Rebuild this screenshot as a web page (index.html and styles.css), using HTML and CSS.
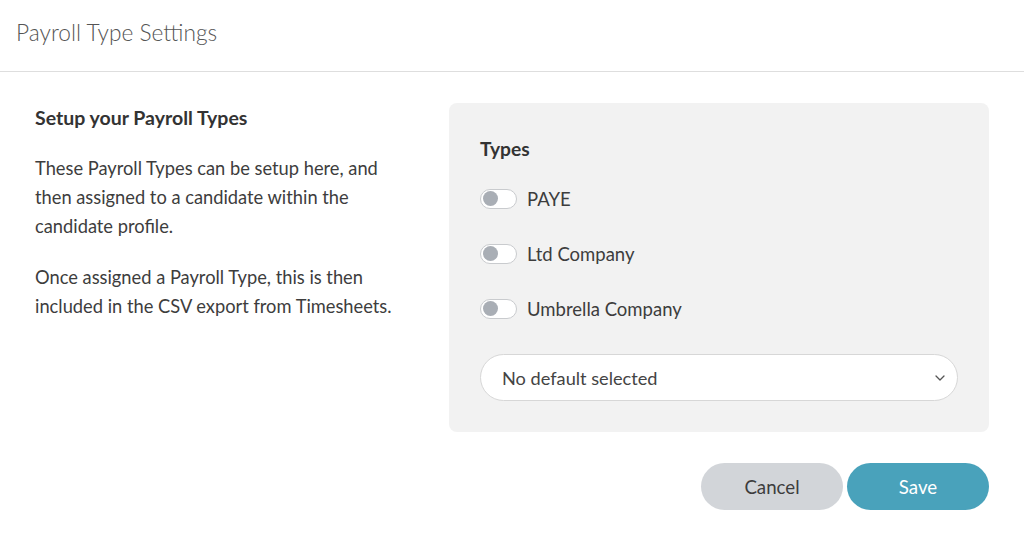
FILE: index.html
```html
<!DOCTYPE html>
<html lang="en">
<head>
<meta charset="utf-8">
<title>Payroll Type Settings</title>
<link rel="stylesheet" href="styles.css">
</head>
<body>
<header class="page-header">
  <h1 class="page-title">Payroll Type Settings</h1>
</header>
<main class="content">
  <section class="intro">
    <h2 class="intro-title">Setup your Payroll Types</h2>
    <p class="intro-text">These Payroll Types can be setup here, and then assigned to a candidate within the candidate profile.</p>
    <p class="intro-text">Once assigned a Payroll Type, this is then included in the CSV export from Timesheets.</p>
  </section>
  <section class="settings">
    <div class="panel">
      <h3 class="panel-title">Types</h3>
      <label class="type-row"><span class="toggle"><span class="knob"></span></span><span class="type-label">PAYE</span></label>
      <label class="type-row"><span class="toggle"><span class="knob"></span></span><span class="type-label">Ltd Company</span></label>
      <label class="type-row"><span class="toggle"><span class="knob"></span></span><span class="type-label">Umbrella Company</span></label>
      <div class="select">
        <span class="select-text">No default selected</span>
        <svg class="chevron" width="10" height="6" viewBox="0 0 10 6"><path d="M1 1l4 4 4-4" fill="none" stroke="#555" stroke-width="1.3" stroke-linecap="round" stroke-linejoin="round"/></svg>
      </div>
    </div>
    <div class="actions">
      <button class="btn btn-cancel">Cancel</button>
      <button class="btn btn-save">Save</button>
    </div>
  </section>
</main>
</body>
</html>
```

FILE: styles.css
```css
* { box-sizing: border-box; }
body {
  margin: 0;
  background: #fff;
  font-family: "Lato", "Noto Sans", sans-serif;
  color: #3a3a3a;
}
.page-header {
  height: 72px;
  border-bottom: 1px solid #dedede;
  display: flex;
  align-items: center;
  padding: 0 16px 6px;
}
.page-title {
  margin: 0;
  font-size: 22.7px;
  font-weight: 300;
  color: #555;
}
.content {
  display: flex;
  padding: 31px 35px 0 35px;
}
.intro {
  width: 414px;
  padding-top: 3px;
}
.intro-title {
  margin: 0 0 25px;
  font-size: 19.5px;
  font-weight: 700;
  color: #333;
}
.intro-text {
  margin: 0 0 22px;
  max-width: 372px;
  font-size: 18.3px;
  line-height: 29px;
  color: #3d3d3d;
}
.settings {
  flex: 1;
  display: flex;
  flex-direction: column;
}
.panel {
  background: #f2f2f2;
  border-radius: 8px;
  padding: 34px 31px 31px;
}
.panel-title {
  margin: 0 0 19px;
  font-size: 19.2px;
  font-weight: 700;
  color: #333;
}
.type-row {
  display: flex;
  align-items: center;
  gap: 10px;
  height: 55px;
  margin-top: -18px;
  margin-bottom: 18px;
  font-size: 18.5px;
  color: #3d3d3d;
}
.type-row:first-of-type { margin-top: -8px; }
.toggle {
  width: 37px;
  height: 20px;
  border-radius: 10px;
  border: 1.5px solid #c9cbce;
  background: #fff;
  display: flex;
  align-items: center;
  padding-left: 2px;
}
.knob {
  width: 15px;
  height: 15px;
  border-radius: 50%;
  background: #a9aeb5;
}
.select {
  display: flex;
  align-items: center;
  justify-content: space-between;
  height: 47px;
  margin-top: 1px;
  background: #fff;
  border: 1px solid #d7d7d7;
  border-radius: 24px;
  padding: 0 12px 0 21px;
  font-size: 18.2px;
  color: #444;
}
.actions {
  display: flex;
  justify-content: flex-end;
  gap: 4px;
  margin-top: 31px;
}
.btn {
  width: 142px;
  height: 47px;
  border: none;
  border-radius: 24px;
  font-family: inherit;
  font-size: 18.7px;
}
.btn-cancel { background: #d2d5d9; color: #3d3d3d; }
.btn-save { background: #49a2bb; color: #fff; }
```
